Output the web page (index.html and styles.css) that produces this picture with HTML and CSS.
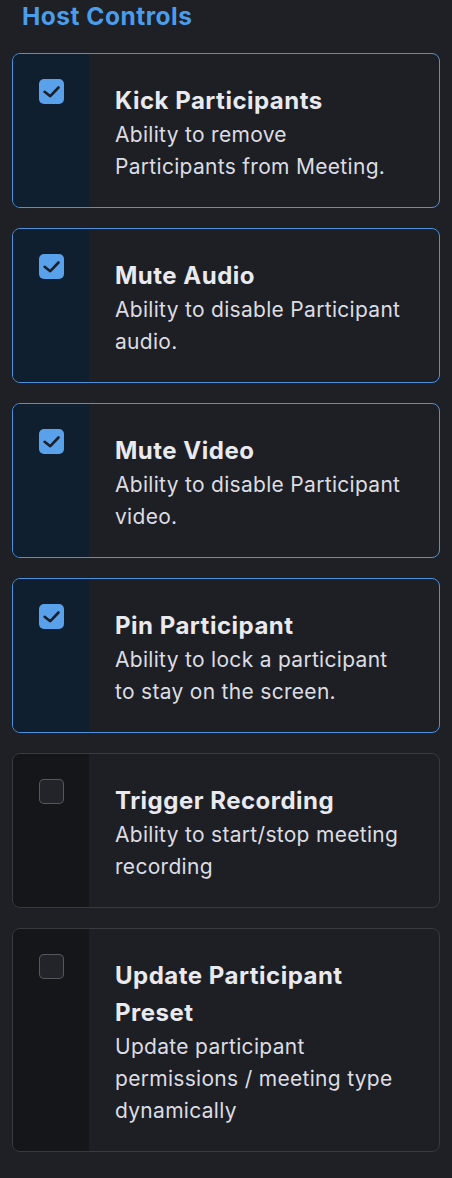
FILE: index.html
```html
<!DOCTYPE html>
<html lang="en">
<head>
<meta charset="utf-8">
<title>Host Controls</title>
<link rel="stylesheet" href="styles.css">
</head>
<body>
<div class="page">
  <h2 class="section-title">Host Controls</h2>
  <div class="list">
    <label class="perm is-on">
      <div class="perm-side"><span class="box"><svg viewBox="0 0 25 25" width="25" height="25"><path d="M5.6 12.8l5.7 4.4 8.2-8.7" fill="none" stroke="#1b1f27" stroke-width="2.6" stroke-linecap="round" stroke-linejoin="round"/></svg></span></div>
      <div class="perm-body">
        <div class="perm-title">Kick Participants</div>
        <div class="perm-desc">Ability to remove Participants from Meeting.</div>
      </div>
    </label>
    <label class="perm is-on">
      <div class="perm-side"><span class="box"><svg viewBox="0 0 25 25" width="25" height="25"><path d="M5.6 12.8l5.7 4.4 8.2-8.7" fill="none" stroke="#1b1f27" stroke-width="2.6" stroke-linecap="round" stroke-linejoin="round"/></svg></span></div>
      <div class="perm-body">
        <div class="perm-title">Mute Audio</div>
        <div class="perm-desc">Ability to disable Participant audio.</div>
      </div>
    </label>
    <label class="perm is-on">
      <div class="perm-side"><span class="box"><svg viewBox="0 0 25 25" width="25" height="25"><path d="M5.6 12.8l5.7 4.4 8.2-8.7" fill="none" stroke="#1b1f27" stroke-width="2.6" stroke-linecap="round" stroke-linejoin="round"/></svg></span></div>
      <div class="perm-body">
        <div class="perm-title">Mute Video</div>
        <div class="perm-desc">Ability to disable Participant video.</div>
      </div>
    </label>
    <label class="perm is-on">
      <div class="perm-side"><span class="box"><svg viewBox="0 0 25 25" width="25" height="25"><path d="M5.6 12.8l5.7 4.4 8.2-8.7" fill="none" stroke="#1b1f27" stroke-width="2.6" stroke-linecap="round" stroke-linejoin="round"/></svg></span></div>
      <div class="perm-body">
        <div class="perm-title">Pin Participant</div>
        <div class="perm-desc">Ability to lock a participant to stay on the screen.</div>
      </div>
    </label>
    <label class="perm">
      <div class="perm-side"><span class="box"></span></div>
      <div class="perm-body">
        <div class="perm-title">Trigger Recording</div>
        <div class="perm-desc">Ability to start/stop meeting recording</div>
      </div>
    </label>
    <label class="perm">
      <div class="perm-side"><span class="box"></span></div>
      <div class="perm-body">
        <div class="perm-title">Update Participant Preset</div>
        <div class="perm-desc">Update participant permissions / meeting type dynamically</div>
      </div>
    </label>
  </div>
</div>
</body>
</html>
```

FILE: styles.css
```css
* { box-sizing: border-box; }
html, body {
  margin: 0;
  background: #1f2025;
}
body {
  font-family: Inter, "Noto Sans", "DejaVu Sans", sans-serif;
  color: #e6e7ec;
}
.page {
  padding: 0 12px 26px 12px;
}
.section-title {
  margin: 0 0 21px 10px;
  font-size: 24.5px;
  line-height: 32px;
  font-weight: 700;
  letter-spacing: 0.5px;
  color: #4a9deb;
}
.list {
  display: flex;
  flex-direction: column;
  gap: 20px;
}
.perm {
  display: flex;
  border: 1px solid #393a40;
  border-radius: 8px;
  background: #1e1f24;
  overflow: hidden;
}
.perm.is-on {
  border-color: #4a92dc;
}
.perm-side {
  flex: 0 0 76px;
  display: flex;
  justify-content: center;
  align-items: flex-start;
  padding-top: 25px;
  background: #151619;
}
.perm.is-on .perm-side {
  background: #0f1f2f;
}
.box {
  width: 25px;
  height: 25px;
  border-radius: 5px;
  box-shadow: inset 0 0 0 1px #56575d;
  background: #232429;
  display: block;
}
.box svg {
  display: block;
}
.perm.is-on .box {
  background: #5aa1ec;
  box-shadow: none;
}
.perm-body {
  flex: 1;
  padding: 28px 30px 24px 26px;
}
.perm-title {
  font-size: 24px;
  line-height: 37px;
  font-weight: 700;
  letter-spacing: 0.5px;
  color: #e9eaef;
}
.perm-desc {
  font-size: 21px;
  line-height: 32px;
  letter-spacing: 0.3px;
  color: #dcdde2;
}
```
